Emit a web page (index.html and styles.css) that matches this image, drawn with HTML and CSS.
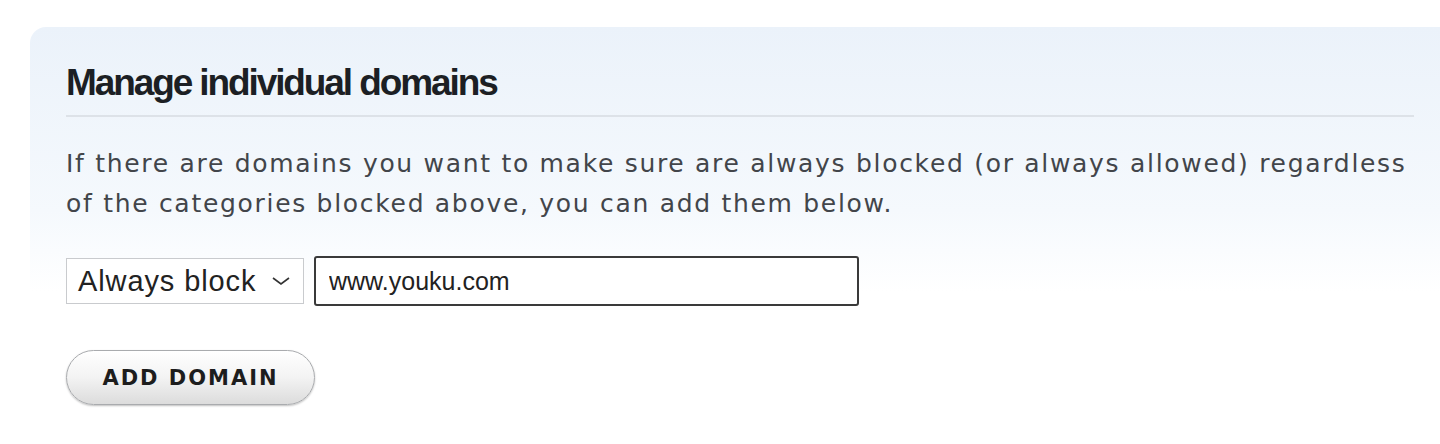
FILE: index.html
```html
<!DOCTYPE html>
<html lang="en">
<head>
    <meta charset="UTF-8">
    <meta name="viewport" content="width=device-width, initial-scale=1.0">
    <title>Manage individual domains</title>
    <link rel="stylesheet" href="styles.css">
</head>
<body>
    <div class="panel">
        <h2 class="panel-title">Manage individual domains</h2>
        <p class="panel-text">If there are domains you want to make sure are always blocked (or always allowed) regardless of the categories blocked above, you can add them below.</p>

        <div class="domain-row">
            <div class="select-box">
                <span>Always block</span>
                <svg width="20" height="12" viewBox="0 0 20 12"><path d="M2 3 L10 9 L18 3" fill="none" stroke="#333" stroke-width="1.6"/></svg>
            </div>
            <input type="text" class="domain-input" value="www.youku.com">
        </div>

        <button class="add-btn">ADD DOMAIN</button>
    </div>
</body>
</html>
```

FILE: styles.css
```css
body { margin: 0; background: #fff; font-family: "DejaVu Sans", Verdana, sans-serif; }
.panel { margin: 27px 0 0 30px; padding: 34px 26px 30px 36px; border-top-left-radius: 16px; background: linear-gradient(to bottom, #ebf2fa 0%, #f5f9fd 45%, #ffffff 65%); }
.panel-title { margin: 0; padding-bottom: 10px; border-bottom: 2px solid #dde2e8; font-family: "Liberation Sans", Arial, sans-serif; font-size: 37px; font-weight: bold; letter-spacing: -2.1px; color: #1c1f24; line-height: 44px; }
.panel-text { margin: 27px 0 0; font-size: 25px; letter-spacing: 1.7px; line-height: 40px; color: #42454a; }
.domain-row { display: flex; align-items: center; gap: 10px; margin-top: 32px; }
.select-box { display: flex; align-items: center; justify-content: space-between; box-sizing: border-box; width: 238px; height: 46px; padding: 0 12px 0 11px; border: 1px solid #c9cbce; background: #fff; font-family: "Liberation Sans", Arial, sans-serif; font-size: 29px; letter-spacing: 0.9px; color: #222; }
.domain-input { box-sizing: border-box; width: 545px; height: 50px; padding: 0 13px; border: 2px solid #3a3a3a; border-radius: 3px; font-family: "Liberation Sans", Arial, sans-serif; font-size: 25px; color: #222; outline: none; }
.add-btn { display: block; margin-top: 44px; width: 249px; height: 55px; border: 1px solid #a9abae; border-radius: 28px; background: linear-gradient(to bottom, #ffffff 0%, #f3f3f3 50%, #dcdcdc 100%); box-shadow: 0 1px 2px rgba(0,0,0,0.25); font-family: "DejaVu Sans", Verdana, sans-serif; font-size: 21px; font-weight: bold; letter-spacing: 2px; color: #1d1d1d; }
```
